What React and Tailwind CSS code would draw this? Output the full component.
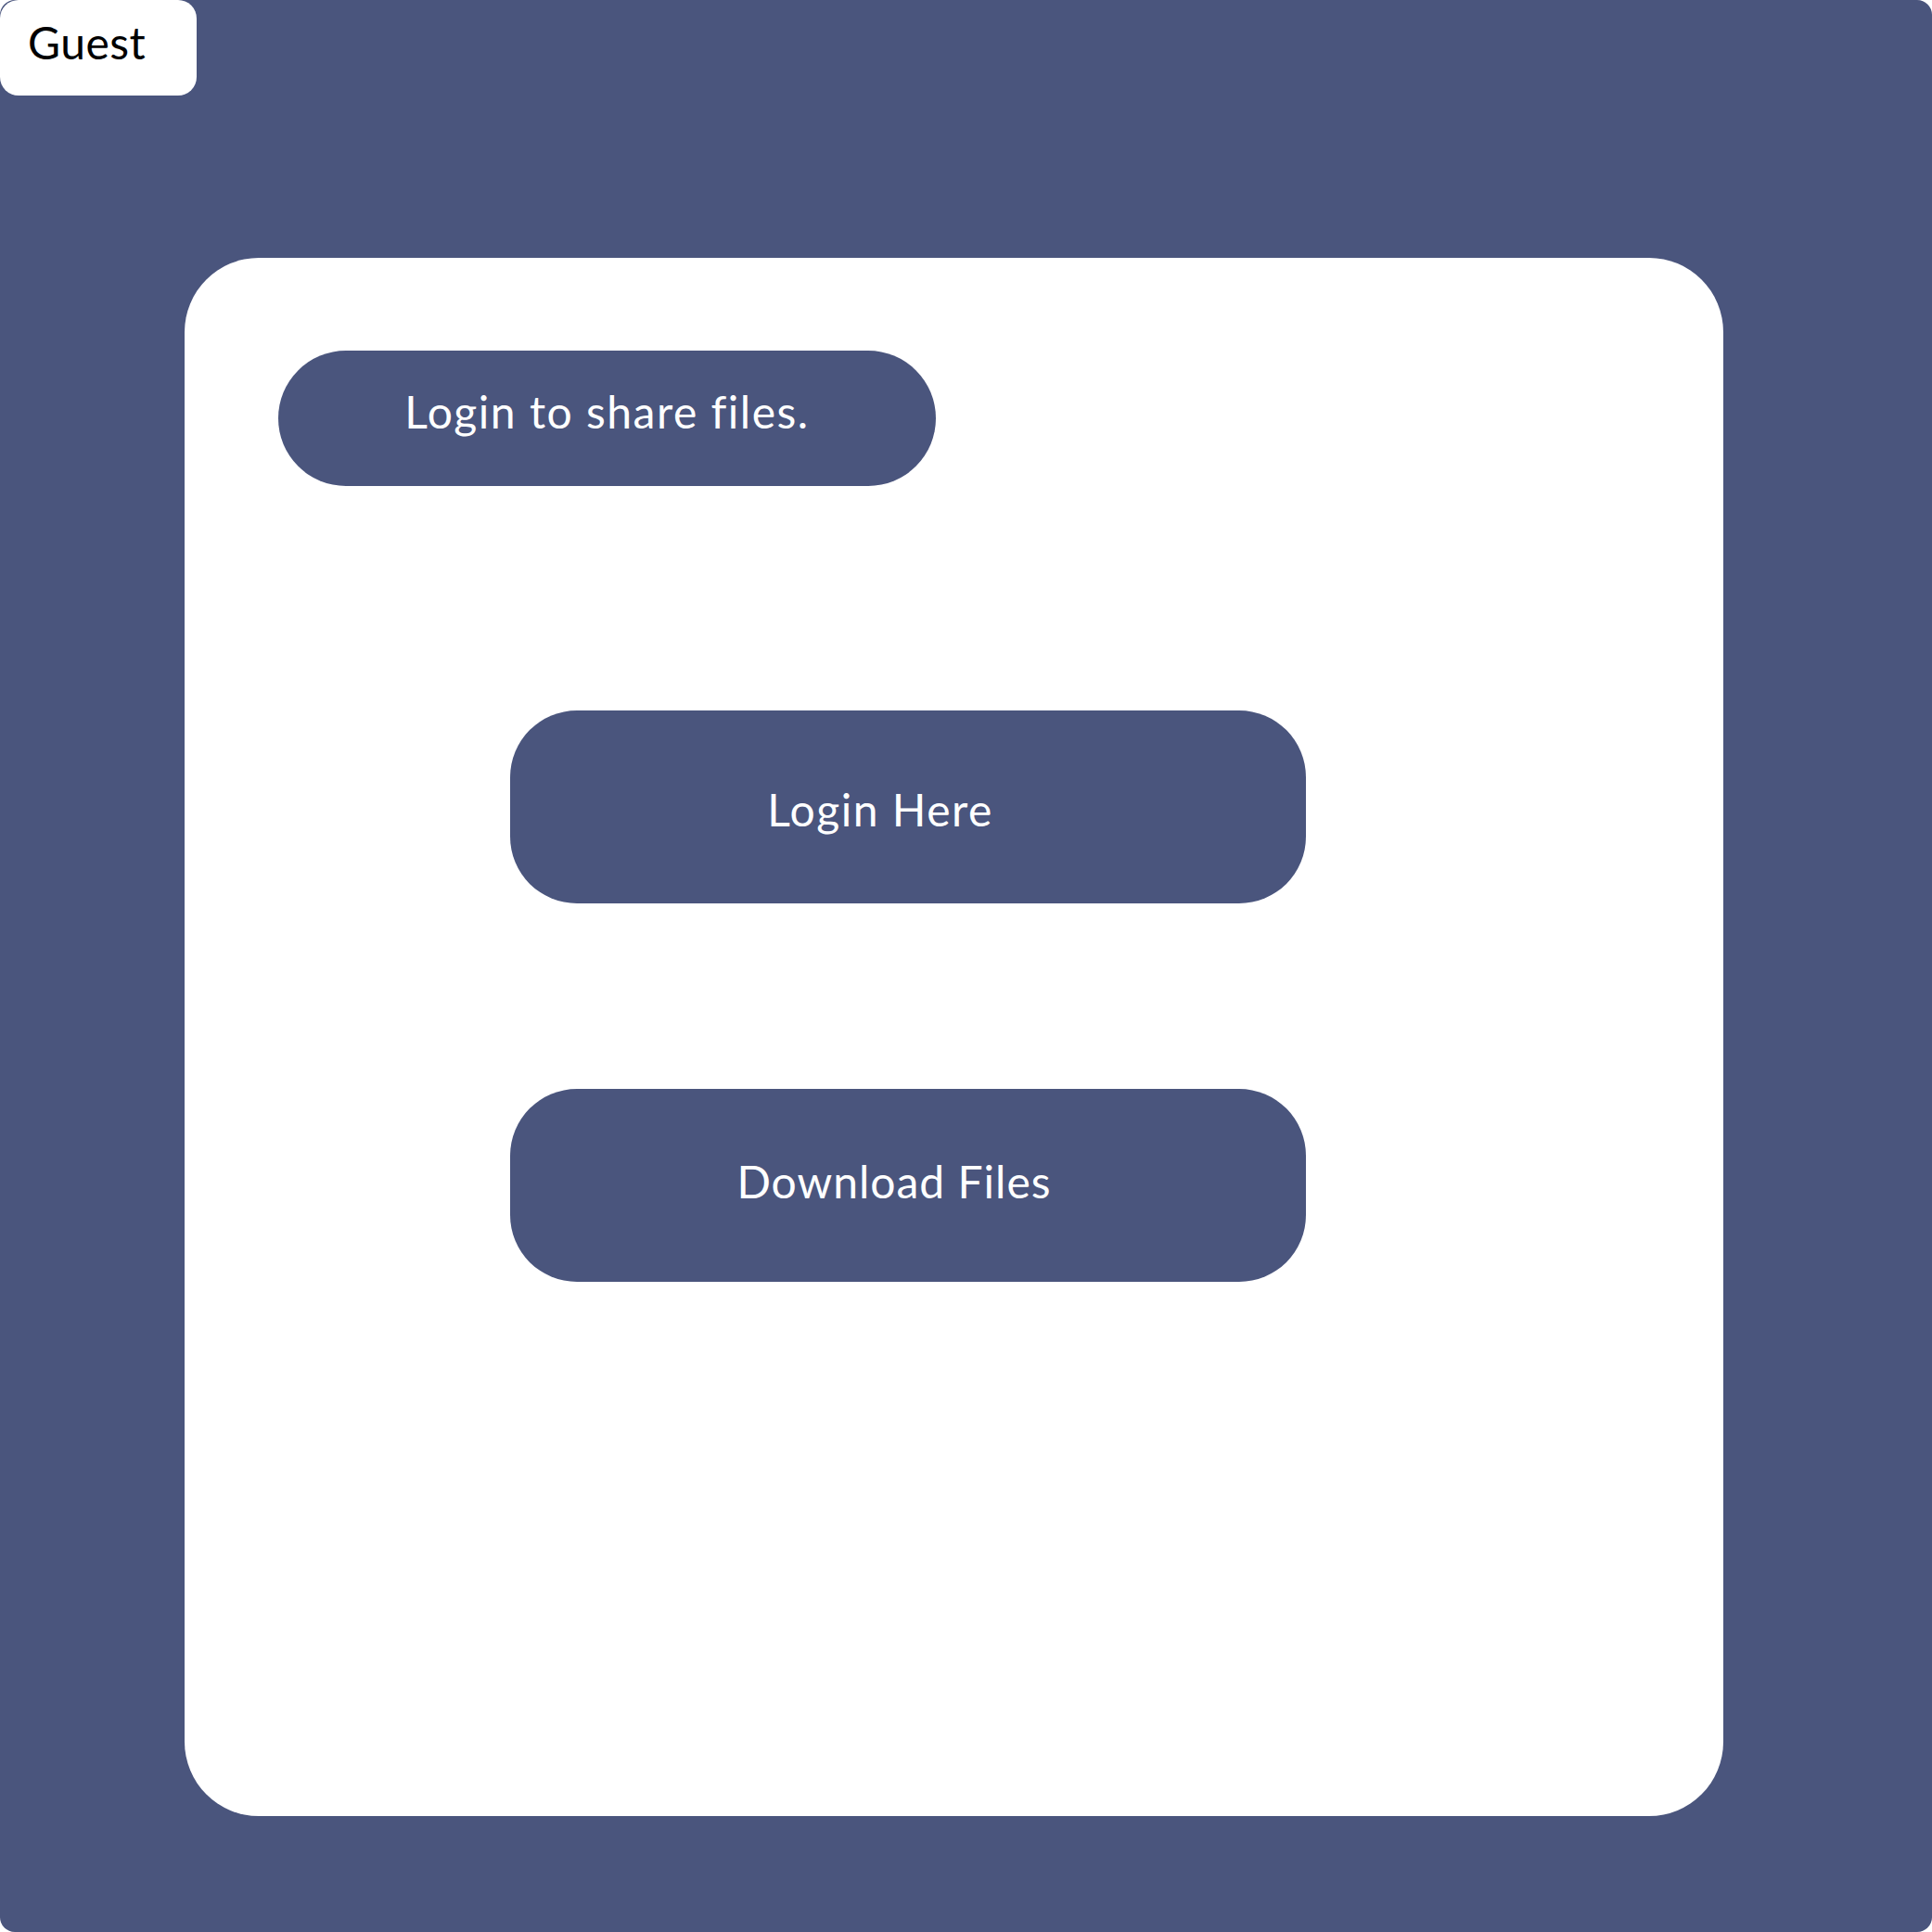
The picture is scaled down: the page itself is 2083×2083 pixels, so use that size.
const BLUE = 'bg-[#4a557d]'

function ActionButton({ label, className }) {
  return (
    <button
      className={`flex h-[208px] w-[858px] items-center justify-center rounded-[72px] bg-[#4a557d] text-[48px] text-white ${className}`}
    >
      {label}
    </button>
  )
}

export default function App() {
  return (
    <div className="bg-white font-['Lato','Noto_Sans',sans-serif]">
      <div className={`${BLUE} min-h-[2083px] w-full rounded-2xl pb-[125px]`}>
        <div className="h-[103px] w-[212px] rounded-[20px] bg-white pl-[30px] pt-[17px] text-[48px] leading-[1.2] tracking-[0.5px] text-black">
          Guest
        </div>

        <div className="ml-[199px] mt-[175px] flex h-[1680px] w-[1659px] flex-col items-start rounded-[80px] bg-white pl-[101px] pt-[100px]">
          <div className="flex h-[146px] w-[709px] items-center justify-center rounded-full bg-[#4a557d] pb-[14px] text-[48px] leading-[1.2] tracking-[1.5px] text-white">
            Login to share files.
          </div>

          <div className="ml-[250px] mt-[242px] flex flex-col gap-[200px] leading-[1.2]">
            <ActionButton label="Login Here" className="tracking-[1.5px] pr-[60px] pt-[6px]" />
            <ActionButton label="Download Files" className="tracking-[1px] pr-[30px] pb-[8px]" />
          </div>
        </div>
      </div>
    </div>
  )
}
